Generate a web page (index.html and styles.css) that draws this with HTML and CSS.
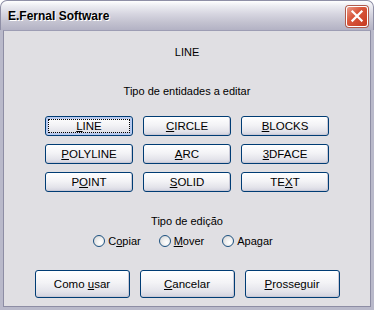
FILE: index.html
```html
<!DOCTYPE html>
<html lang="pt">
<head>
  <meta charset="UTF-8">
  <title>E.Fernal Software</title>
  <link rel="stylesheet" href="styles.css">
</head>
<body>
  <div class="window">
    <div class="titlebar">
      <span class="title">E.Fernal Software</span>
      <button class="close" aria-label="Fechar">
        <svg viewBox="0 0 22 21" width="22" height="21">
          <path d="M6 5l10 10M16 5L6 15" stroke="white" stroke-width="2.4" stroke-linecap="square"/>
        </svg>
      </button>
    </div>

    <div class="client">
      <p class="current">LINE</p>
      <p class="caption">Tipo de entidades a editar</p>

      <div class="grid">
        <button class="btn focused"><u>L</u>INE</button>
        <button class="btn"><u>C</u>IRCLE</button>
        <button class="btn"><u>B</u>LOCKS</button>
        <button class="btn"><u>P</u>OLYLINE</button>
        <button class="btn"><u>A</u>RC</button>
        <button class="btn"><u>3</u>DFACE</button>
        <button class="btn">P<u>O</u>INT</button>
        <button class="btn"><u>S</u>OLID</button>
        <button class="btn">TE<u>X</u>T</button>
      </div>

      <p class="caption edit">Tipo de edição</p>
      <div class="radios">
        <label class="radio"><span class="dot"></span><span>C<u>o</u>piar</span></label>
        <label class="radio"><span class="dot"></span><span><u>M</u>over</span></label>
        <label class="radio"><span class="dot"></span><span>Apa<u>g</u>ar</span></label>
      </div>

      <div class="actions">
        <button class="btn big">Como <u>u</u>sar</button>
        <button class="btn big"><u>C</u>ancelar</button>
        <button class="btn big"><u>P</u>rosseguir</button>
      </div>
    </div>
  </div>
</body>
</html>
```

FILE: styles.css
```css
body {
  margin: 0;
  background: #ffffff;
  font-family: 'Liberation Sans', Tahoma, sans-serif;
  font-size: 11px;
  color: #000;
}

.window {
  width: 374px;
  height: 310px;
  box-sizing: border-box;
  border-radius: 7px 7px 0 0;
  overflow: hidden;
  display: flex;
  flex-direction: column;
  background: #b9b9ca;
}

.titlebar {
  height: 29px;
  flex: none;
  display: flex;
  align-items: center;
  justify-content: space-between;
  padding: 0 5px 0 7px;
  background: linear-gradient(#ffffff 0%, #eeeef3 15%, #d6d5e0 45%, #c2c1cf 75%, #b3b2c4 100%);
  border: 1px solid #8f8fa6;
  border-bottom: none;
  border-radius: 7px 7px 0 0;
}

.title {
  font-family: 'Liberation Sans', sans-serif;
  font-weight: bold;
  font-size: 12px;
  color: #000;
  text-shadow: 1px 1px 0 #ffffff;
  margin-top: 1px;
}

.close {
  width: 22px;
  height: 21px;
  padding: 0;
  border: 1px solid #ffffff;
  border-radius: 3px;
  background: linear-gradient(135deg, #e99a88 0%, #d9583d 40%, #c6391f 100%);
  box-shadow: 0 0 0 1px #b05a4b;
  display: flex;
  align-items: center;
  justify-content: center;
  margin-top: 1px;
}

.close svg {
  display: block;
}

.client {
  flex: 1;
  margin: 0 3px 3px;
  border: 1px solid #8d8da4;
  border-top-color: #9d9db4;
  background: #e0dfe3;
  display: flex;
  flex-direction: column;
  align-items: center;
}

p {
  margin: 0;
}

.current {
  margin-top: 15px;
}

.caption {
  margin-top: 27px;
}

.grid {
  margin-top: 19px;
  display: grid;
  grid-template-columns: repeat(3, 88px);
  grid-auto-rows: 20px;
  column-gap: 10px;
  row-gap: 8px;
}

.btn {
  font: inherit;
  font-size: 11.5px;
  color: #000;
  padding: 0;
  border: 1px solid #003c74;
  border-radius: 3px;
  background: linear-gradient(#ffffff 0%, #f3f3f6 45%, #e3e3ea 80%, #d2d2de 100%);
  box-shadow: inset -1px -1px 0 #c9c9d6;
}

.btn u {
  text-decoration-thickness: 1px;
}

.btn.focused {
  outline: 1px dotted #000;
  outline-offset: -4px;
  box-shadow: inset 0 0 0 2px #b7c9ef;
}

.edit {
  margin-top: 23px;
}

.radios {
  margin-top: 8px;
  margin-right: 8px;
  display: flex;
  gap: 18px;
}

.radio {
  display: flex;
  align-items: center;
  gap: 3px;
}

.dot {
  width: 10px;
  height: 10px;
  border-radius: 50%;
  border: 1px solid #1c5180;
  background: radial-gradient(circle at 65% 65%, #ffffff 0%, #f0f0f0 40%, #d4d4d4 90%);
}

.actions {
  margin-top: 23px;
  display: flex;
  gap: 10px;
}

.btn.big {
  width: 95px;
  height: 28px;
}
```
